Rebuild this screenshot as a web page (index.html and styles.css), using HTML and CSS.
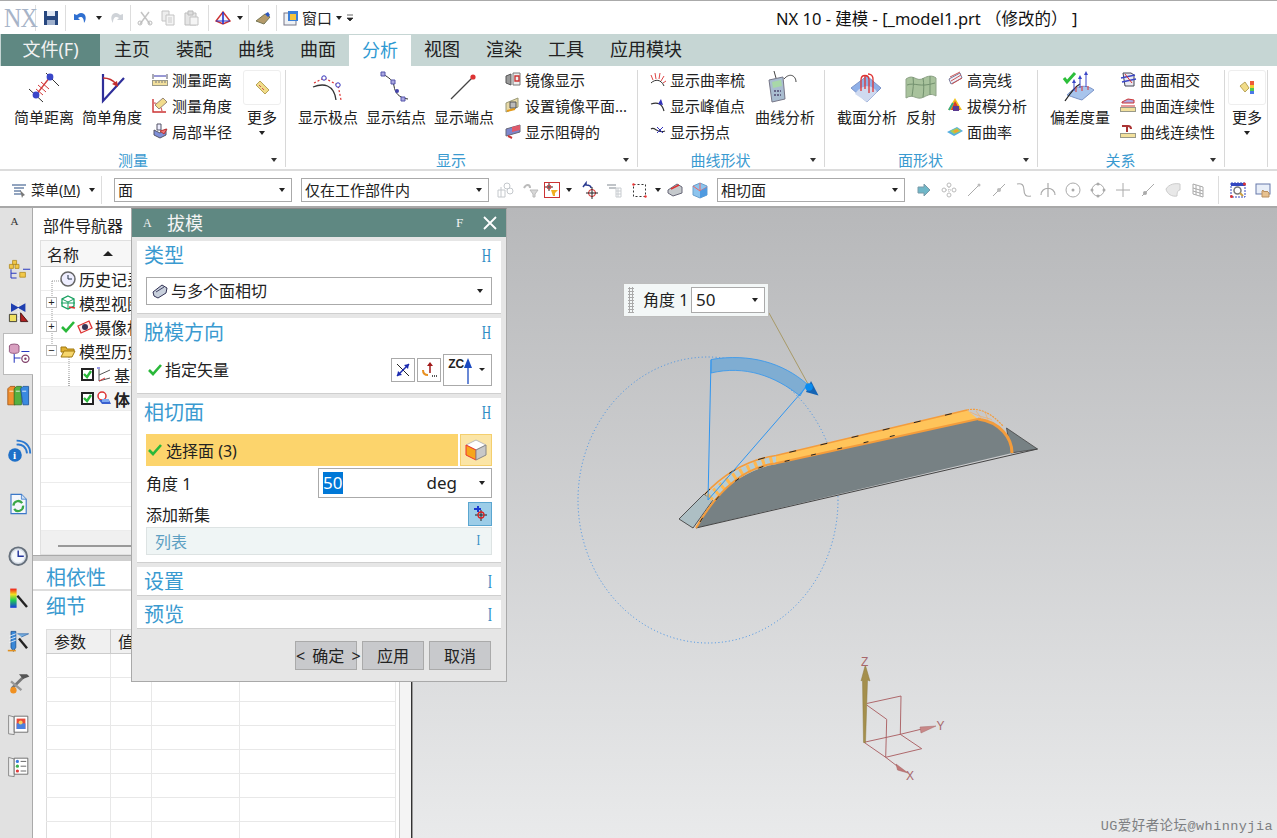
FILE: index.html
```html
<!DOCTYPE html>
<html lang="zh">
<head>
<meta charset="utf-8">
<title>NX 10</title>
<link rel="stylesheet" href="styles.css">
</head>
<body>
<div class="app">
  <header class="qat">
    <div class="qg logo-g"><span class="logo">NX</span></div>
    <div class="qg">
      <svg class="i18"><path d="M2 2h14v14H2z" fill="#27477f"/><path d="M5 2h8v5H5z" fill="#dfe6f2"/><path d="M5 11h8v5H5z" fill="#9fb0cc"/></svg>
    </div>
    <div class="qg">
      <svg class="i16"><path d="M2 4v6h6L6 8c3-2 6-1 6 5 3-4 2-10-3-10-2 0-3 1-4 2z" fill="#2f6fd0"/></svg>
      <i class="caret ml8"></i>
      <svg class="i16 ml7"><path d="M14 4v6H8l2-2C7 6 4 7 4 13 1 9 2 3 7 3c2 0 3 1 4 2z" fill="#cfd3d8"/></svg>
    </div>
    <div class="qg q-edit">
      <svg class="i16"><path d="M3 14 12 2M13 14 4 2" stroke="#c4c4c4" stroke-width="1.5" fill="none"/><circle cx="3" cy="13" r="2" fill="none" stroke="#bbb"/><circle cx="13" cy="13" r="2" fill="none" stroke="#bbb"/></svg>
      <svg class="i16 ml7"><path d="M2 1h7v10H2z" fill="#eee" stroke="#c4c4c4"/><path d="M6 5h8v10H6z" fill="#f4f4f4" stroke="#c4c4c4"/><path d="M8 8h4M8 10h4M8 12h4" stroke="#ccc"/></svg>
      <svg class="i16 ml7"><path d="M2 3h11v12H2z" fill="#e6e6e6" stroke="#bdbdbd"/><path d="M5 1h5v4H5z" fill="#ddd" stroke="#bbb"/><path d="M7 7h8v8H7z" fill="#f5f5f5" stroke="#c4c4c4"/></svg>
    </div>
    <div class="qg">
      <svg class="i16"><path d="M8 2 1 11l7 3 7-3z" fill="#f4f6fb" stroke="#c33" stroke-width="1.4"/><path d="M8 2v12" stroke="#23c" stroke-width="1.6"/><path d="M1 11h14" stroke="#23c"/></svg>
      <i class="caret ml6"></i>
    </div>
    <div class="qg">
      <svg class="i16"><path d="M1 11 10 4l5 3-6 7z" fill="#b49a6a" stroke="#775"/><path d="M10 4l3-2 2 3-2 2z" fill="#2a55c0"/></svg>
    </div>
    <div class="qg last">
      <svg class="i16"><rect x="1" y="3" width="12" height="12" fill="#eef1f4" stroke="#778"/><path d="M5 1h10v10H5z" fill="#3b7fd8"/><path d="M7 4h6v6H7z" fill="#f7c53a"/></svg>
      <span class="qtext">窗口</span>
      <i class="caret ml4"></i>
      <svg class="over ml5"><path d="M0 1h6M0 4h6l-3 3z" fill="#222" stroke="#222" stroke-width=".7"/></svg>
    </div>
    <div class="title">NX 10 - 建模 - [_model1.prt （修改的） ]</div>
  </header>

  <nav class="tabs">
    <div class="file-tab">文件(F)</div>
    <div class="tab">主页</div>
    <div class="tab">装配</div>
    <div class="tab">曲线</div>
    <div class="tab">曲面</div>
    <div class="tab active">分析</div>
    <div class="tab">视图</div>
    <div class="tab">渲染</div>
    <div class="tab">工具</div>
    <div class="tab wide">应用模块</div>
  </nav>

  <section class="ribbon">
    <div class="rgroup g1">
      <div class="rbody">
        <div class="big">
          <svg class="i36"><path d="M20 3l13 13M3 19l14 13" stroke="#333" fill="none"/><path d="M24 7 10 25" stroke="#d23a3a" stroke-width="1.3"/><path d="M15 12l8 7M12 15l8 7M10 19l7 6" stroke="#d23a3a"/><circle cx="24" cy="7" r="3.4" fill="#3a46c8"/><circle cx="10" cy="25" r="3.4" fill="#3a46c8"/></svg>
          <span>简单距离</span>
        </div>
        <div class="big ml8">
          <svg class="i36"><path d="M9 4v27L30 8" fill="none" stroke="#2f2f9a" stroke-width="2.2"/><path d="M9 8c6 0 10 2 13 6" fill="none" stroke="#c42f2f" stroke-width="1.4"/><path d="M24 17l-1-6-5 3z" fill="#c42f2f"/></svg>
          <span>简单角度</span>
        </div>
        <div class="col ml10">
          <div class="row"><svg class="i16"><path d="M1 3v5M15 3v5" stroke="#556"/><path d="M2 5h12" stroke="#33a"/><rect x=".5" y="9.500" width="15" height="5" fill="#f2e09c" stroke="#998"/><path d="M4 10v2M7 10v2M10 10v2M13 10v2" stroke="#777"/></svg><span>测量距离</span></div>
          <div class="row"><svg class="i16"><path d="M1 2v13h13" fill="none" stroke="#c33" stroke-width="1.4"/><path d="M2 6c4 0 7 3 8 8" fill="none" stroke="#c33"/><path d="M3 8l8-7 4 4-8 7z" fill="#f2dc8c" stroke="#987"/></svg><span>测量角度</span></div>
          <div class="row"><svg class="i16"><path d="M2 7l6 3 6-4v6l-6 3-6-3z" fill="#7f8fd8" stroke="#556"/><path d="M5 1h4v6H5z" fill="#eef" stroke="#556"/><path d="M8 8l7-2-3 5z" fill="#e77" stroke="#b33"/></svg><span>局部半径</span></div>
        </div>
        <div class="more ml11">
          <div class="more-box"><svg class="i16"><path d="M2 5l4-4 9 9-4 4z" fill="#f1dc88" stroke="#b9a45a"/><path d="M5 5l2 2M8 8l2 2" stroke="#c55"/></svg></div>
          <span>更多</span><i class="caret more-caret"></i>
        </div>
      </div>
      <div class="rfoot"><span>测量</span><i class="caret"></i></div>
    </div>

    <div class="rgroup g2">
      <div class="rbody">
        <div class="big">
          <svg class="i36"><path d="M3 17c10-4 21-3 23 13" fill="none" stroke="#333" stroke-width="1.3"/><path d="M4 13 14 8l14 7 3 15" fill="none" stroke="#d33" stroke-dasharray="2 2" stroke-width="1.2"/><circle cx="14" cy="8" r="2.200" fill="#fff" stroke="#33b"/><circle cx="28" cy="15" r="2.200" fill="#fff" stroke="#33b"/></svg>
          <span>显示极点</span>
        </div>
        <div class="big ml8">
          <svg class="i36"><path d="M5 4c6 4 10 6 11 12 1 7 5 12 14 13" fill="none" stroke="#333"/><path d="M3 2h4v4H3zM13 10h4v4h-4zM23 27h4v4h-4z" fill="#aaa8e0" stroke="#55a"/><circle cx="19" cy="21" r="2" fill="#44a"/></svg>
          <span>显示结点</span>
        </div>
        <div class="big ml8">
          <svg class="i36"><path d="M5 29 27 7" stroke="#444" stroke-width="1.3"/><circle cx="27" cy="7" r="2.600" fill="#d33"/></svg>
          <span>显示端点</span>
        </div>
        <div class="col ml11">
          <div class="row"><svg class="i16"><path d="M1 5l5-2v11l-5-2z" fill="#999" stroke="#555"/><path d="M8 2h7v12H8z" fill="#eee" stroke="#777"/><path d="M10 5h4v5h-4z" fill="none" stroke="#c33" stroke-width="1.400"/></svg><span>镜像显示</span></div>
          <div class="row"><svg class="i16"><path d="M1 6l12-5v9L1 15z" fill="#e7d9a8" stroke="#997"/><path d="M5 5h6v6H5z" fill="#bbb" stroke="#555"/><path d="M2 14l8-2" stroke="#e39a1a" stroke-width="2"/></svg><span>设置镜像平面...</span></div>
          <div class="row"><svg class="i16"><path d="M1 6l14-4v7L1 13z" fill="#7d86cc" stroke="#667"/><path d="M7 4l8-2v5L7 9z" fill="#e05a6a"/><path d="M3 13l4 2" stroke="#c33" stroke-width="2"/></svg><span>显示阻碍的</span></div>
        </div>
      </div>
      <div class="rfoot"><span>显示</span><i class="caret"></i></div>
    </div>

    <div class="rgroup g3">
      <div class="rbody">
        <div class="col">
          <div class="row"><svg class="i16"><path d="M1 12C5 8 11 8 14 15" fill="none" stroke="#333"/><path d="M3 9 1 4M6 8 5 2M9 8l1-6M11 10l3-5M13 12l3-2" stroke="#d44" fill="none"/></svg><span>显示曲率梳</span></div>
          <div class="row"><svg class="i16"><path d="M1 7c6-2 11-1 13 7" fill="none" stroke="#333" stroke-width="1.200"/><path d="M11 2l2 6-5-1z" fill="#33b"/></svg><span>显示峰值点</span></div>
          <div class="row"><svg class="i16"><path d="M1 6c4-3 6 5 14 2" fill="none" stroke="#333" stroke-width="1.200"/><path d="M7 4l6 6M13 4l-6 6" stroke="#33b"/></svg><span>显示拐点</span></div>
        </div>
        <div class="big ml10">
          <svg class="i36"><path d="M2 10l14-3 2 22-13 3z" fill="#a9bdd0" stroke="#778"/><path d="M5 12l9-2 1 6-9 2z" fill="#a8d8a8"/><path d="M7 21h7M7 25h7" stroke="#668" stroke-width="2" stroke-dasharray="2 1"/><path d="M9 8 7 1M17 9c6-7 12-3 12 3" fill="none" stroke="#444"/></svg>
          <span>曲线分析</span>
        </div>
      </div>
      <div class="rfoot"><span>曲线形状</span><i class="caret"></i></div>
    </div>

    <div class="rgroup g4">
      <div class="rbody">
        <div class="big">
          <svg class="i36"><path d="M2 18 18 6l14 12-14 14z" fill="#8fb0e8" stroke="#7d95c8"/><path d="M6 24C12 14 24 14 28 22l-10 10z" fill="#cfdaf0"/><path d="M12 21V10c0-6 8-6 8 0v13M16 19V5M24 22V9c0-5-5-5-5-5" fill="none" stroke="#d33" stroke-width="1.300"/></svg>
          <span>截面分析</span>
        </div>
        <div class="big w30 ml9">
          <svg class="i36"><path d="M3 9c8-6 10 4 18-1 4-2 8-3 12 0l0 18c-5-3-8-1-12 1-8 4-10-4-18 1z" fill="#a8c29c" stroke="#8fa388"/><path d="M10 7c1 7 0 12-1 19M20 8c1 6 1 12 0 19M27 6l0 19M4 15c8-3 12 3 28-2" stroke="#73916f" fill="none"/></svg>
          <span>反射</span>
        </div>
        <div class="col ml11">
          <div class="row"><svg class="i16"><path d="M2 8 13 2l2 5L4 13z" fill="#f0f0f8" stroke="#779"/><path d="M3 6 13 1M4 10l10-6M5 13l10-6" stroke="#c55" fill="none"/></svg><span>高亮线</span></div>
          <div class="row"><svg class="i16"><path d="M1 13 8 1l7 12z" fill="#f2c11a"/><path d="M8 4l5 9H4z" fill="#d83a28"/><path d="M6 9h6v5H6z" fill="#5a3a90"/><path d="M2 13 6 6" stroke="#3a8" stroke-width="2"/></svg><span>拔模分析</span></div>
          <div class="row"><svg class="i16"><path d="M0 9 10 4l6 4-9 5z" fill="#55aee0"/><path d="M3 8l7-3 4 3-7 3z" fill="#9fd35a"/><path d="M6 8l4-2 2 2-4 2z" fill="#f0a030"/></svg><span>面曲率</span></div>
        </div>
      </div>
      <div class="rfoot"><span>面形状</span><i class="caret"></i></div>
    </div>

    <div class="rgroup g5">
      <div class="rbody">
        <div class="big">
          <svg class="i36"><path d="M5 25C14 15 24 14 32 20l-12 10c-4-1-9-3-15-5z" fill="#a8c4ec" stroke="#7d95c8"/><path d="M3 31C9 22 14 16 18 14" fill="none" stroke="#222" stroke-width="1.300"/><path d="M2 8l3 4 8-9" fill="none" stroke="#2cbf3a" stroke-width="3"/><path d="M12 21V12M18 18V8M24 17V4" stroke="#3a46c8"/><path d="M10 13l2-4 2 4zM16 9l2-4 2 4zM22 5l2-4 2 4z" fill="#3a46c8"/><path d="M14 22v-5M20 21v-5M26 20v-4" stroke="#d33"/></svg>
          <span>偏差度量</span>
        </div>
        <div class="col ml10">
          <div class="row"><svg class="i16"><path d="M3 2h8l3 2v11H5z" fill="#e9e9f2" stroke="#445"/><path d="M1 7l14-3M2 11l14-3" stroke="#3a46c8" stroke-width="1.500"/><path d="M5 3l7 9" stroke="#d33"/></svg><span>曲面相交</span></div>
          <div class="row"><svg class="i16"><path d="M2 5l6-3 6 1v3H2z" fill="#b0a8e0" stroke="#c33"/><path d="M1 9h14" stroke="#c33"/><rect x=".5" y="10.500" width="15" height="4" fill="#f2e09c" stroke="#998"/></svg><span>曲面连续性</span></div>
          <div class="row"><svg class="i16"><path d="M2 3h6c2 0 3 1 3 3" fill="none" stroke="#a33" stroke-width="2"/><path d="M7 3v6" stroke="#a33" stroke-width="2"/><rect x=".5" y="10.500" width="15" height="4" fill="#f2e09c" stroke="#998"/></svg><span>曲线连续性</span></div>
        </div>
      </div>
      <div class="rfoot"><span>关系</span><i class="caret"></i></div>
    </div>

    <div class="rgroup g6">
      <div class="more mt0">
        <div class="more-box"><svg class="i16"><path d="M1 6l5-4 4 6-4 4z" fill="#f1dc88" stroke="#b9a45a"/><path d="M11 1h4v4h-4z" fill="#ee5a3a"/><path d="M11 5h4v3h-4z" fill="#f0d030"/><path d="M11 8h4v3h-4z" fill="#50c850"/><path d="M11 11h4v3h-4z" fill="#4a78e8"/></svg></div>
        <span>更多</span><i class="caret more-caret"></i>
      </div>
    </div>
  </section>

  <section class="toolbar">
    <svg class="i16 menu-ic"><path d="M1 3h14M3 6h10M3 9h7M3 12h7" stroke="#6f86aa" stroke-width="1.500"/><path d="M9 8l5 5-2 1-1 2z" fill="#777"/></svg>
    <span class="menu-t">菜单(<u>M</u>)</span>
    <i class="caret ml4"></i>
    <b class="tsep sep-a"></b>
    <div class="sel w178 ml12"><span>面</span><i class="caret"></i></div>
    <div class="sel w188 ml9"><span>仅在工作部件内</span><i class="caret"></i></div>
    <svg class="i16 ml8"><g fill="none" stroke="#c4c8cc"><path d="M1 8h7v7H1zM4 5v10"/><circle cx="10" cy="4" r="3"/><circle cx="13" cy="9" r="3"/></g></svg>
    <svg class="i16 ml10"><path d="M1 6c2-4 6-4 6 0" fill="none" stroke="#bbb" stroke-width="2"/><path d="M7 8h8l-3 4v3h-2v-3z" fill="#d8d8d8" stroke="#bbb"/></svg>
    <svg class="i16 ml5 boxed"><path d="M5 1v8M1 5h8" stroke="#333"/><circle cx="5" cy="5" r="2" fill="none" stroke="#c33"/><path d="M7 8h7l-3 3v3H9z" fill="#f0b020"/></svg>
    <i class="caret ml6"></i>
    <svg class="i16 ml10"><path d="M1 5l3-4v2c3 0 5 1 5 3" fill="none" stroke="#2a3a90" stroke-width="1.500"/><circle cx="10" cy="11" r="3.500" fill="none" stroke="#d22"/><path d="M10 5v12M4 11h12" stroke="#222"/></svg>
    <svg class="i16 ml8"><path d="M1 3h9M3 6h7" stroke="#c0c4c8" stroke-width="2"/><path d="M10 6h5v9h-5zM10 9h5M10 12h5M12 6v9" fill="none" stroke="#c8ccd0"/></svg>
    <svg class="i16 ml9"><path d="M2.500 2.500h12v12h-12z" fill="none" stroke="#333" stroke-dasharray="2 2"/><circle cx="2.500" cy="2.500" r="1.200" fill="#e33"/><circle cx="14.500" cy="14.500" r="1.200" fill="#e33"/></svg>
    <i class="caret ml8"></i>
    <svg class="i16 ml6"><path d="M1 8 10 2l5 3v6l-9 3-5-3z" fill="#c5c9cc" stroke="#667"/><path d="M4 7l8-4" stroke="#d33" stroke-width="1.500"/></svg>
    <svg class="i16 ml9"><path d="M1 4l7-3 7 3v9l-7 3-7-3z" fill="#8cc4ee" stroke="#6aa0cc"/><path d="M8 1v8l7-4M1 4l7 5" stroke="#e66" fill="none"/><path d="M8 9l7-4v8l-7 3z" fill="#4f9ae0"/></svg>
    <div class="sel w188 ml9"><span>相切面</span><i class="caret"></i></div>
    <div class="gray-icons">
      <svg class="i16"><path d="M2 5h6V2l6 6-6 6v-3H2z" fill="#6fb7c8" stroke="#7a9aa8"/></svg>
      <svg class="i16"><g fill="none" stroke="#bbb"><circle cx="8" cy="3" r="2"/><circle cx="3" cy="8" r="2"/><circle cx="13" cy="8" r="2"/><circle cx="8" cy="13" r="2"/><path d="M8 5v6M5 8h6" stroke-dasharray="1 1"/></g></svg>
      <svg class="i16"><path d="M2 14 14 2" stroke="#aaa"/><circle cx="13" cy="3" r="1.500" fill="#bbb"/></svg>
      <svg class="i16"><path d="M2 14 14 2" stroke="#aaa"/><circle cx="8" cy="8" r="2" fill="#bbb"/></svg>
      <svg class="i16"><path d="M1 2c5-1 7 1 7 6s2 7 7 6" fill="none" stroke="#aaa" stroke-width="1.200"/></svg>
      <svg class="i16"><path d="M1 13C1 4 15 4 15 13M8 1v14" fill="none" stroke="#aaa" stroke-width="1.200"/></svg>
      <svg class="i16"><circle cx="8" cy="8" r="7" fill="none" stroke="#aaa"/><circle cx="8" cy="8" r="1.500" fill="#aaa"/></svg>
      <svg class="i16"><circle cx="8" cy="8" r="6" fill="none" stroke="#aaa"/><circle cx="8" cy="2" r="1.500" fill="#aaa"/><circle cx="8" cy="14" r="1.500" fill="#aaa"/><circle cx="2" cy="8" r="1.500" fill="#aaa"/><circle cx="14" cy="8" r="1.500" fill="#aaa"/></svg>
      <svg class="i16"><path d="M8 1v14M1 8h14" stroke="#aaa"/></svg>
      <svg class="i16"><path d="M2 14 14 2" stroke="#aaa"/><circle cx="5" cy="11" r="2" fill="#aaa"/></svg>
      <svg class="i16"><path d="M1 7c3-5 9-6 14-5v6c-2 0-3 2-3 6-5 1-10-2-11-7z" fill="#e8e8e8" stroke="#ccc"/></svg>
      <svg class="i16"><path d="M3 2l10 3v10L3 12zM3 6l10 3M3 9l10 3M6 3v10M10 4v10" fill="none" stroke="#aaa"/></svg>
    </div>
    <b class="tsep sep-b"></b>
    <svg class="i16 ml11"><rect x="1" y="1" width="14" height="14" fill="#fff" stroke="#3348c0" stroke-dasharray="2 1"/><path d="M1 1h14v3H1z" fill="#3348c0"/><circle cx="7.500" cy="8.500" r="3.500" fill="none" stroke="#777" stroke-width="1.500"/><path d="M10 11l3 3" stroke="#caa040" stroke-width="2"/><circle cx="1.500" cy="14.500" r="1.500" fill="#d33"/><circle cx="14.500" cy="2" r="1.500" fill="#d33"/></svg>
    <svg class="i16 ml9"><rect x="1" y="2" width="14" height="10" fill="#e8eef8" stroke="#6678aa"/><path d="M7 15V9l1-1 1 2 1-1 1 1 1-1 2 2v4z" fill="#e8c290" stroke="#b99060"/></svg>
  </section>

  <main class="main">
    <aside class="rail">
      <div class="rail-pin">A</div>
      <div class="rail-i mt15"><svg class="i30" viewBox="0 0 30 30"><path d="M7 3h5v5H7zM3 8h5v5H3zM10 8h5v5h-5z" fill="#f2c84a" stroke="#b08a20"/><path d="M5 14v11M5 19h7M5 25h7M20 14h9" stroke="#2a3ac0" stroke-width="1.300" fill="none"/><path d="M16 18h7v6h-7z" fill="#f2c84a" stroke="#b08a20"/></svg></div>
      <div class="rail-i"><svg class="i30" viewBox="0 0 30 30"><path d="M5 4l9 5 9-5v11l-9-5-9 5z" fill="#1f3fb0"/><path d="M14 2v26" stroke="#fff" stroke-dasharray="2 2"/><path d="M3 18h9v9H3z" fill="#f0e060" stroke="#222"/><path d="M17 16l9 11h-9z" fill="#b02020" stroke="#300"/></svg></div>
      <div class="rail-i on"><svg class="i30" viewBox="0 0 30 30"><ellipse cx="9" cy="5" rx="6" ry="2.500" fill="#d8a0c0" stroke="#80406a"/><path d="M3 5v7c0 3 12 3 12 0V5" fill="#d8a0c0" stroke="#80406a"/><path d="M9 15v11M9 20h8M18 12h10" stroke="#2a3ac0" stroke-width="1.300" fill="none"/><circle cx="23" cy="21" r="4.500" fill="none" stroke="#80406a" stroke-width="1.500"/><circle cx="23" cy="21" r="1.500" fill="#80406a"/></svg></div>
      <div class="rail-i"><svg class="i30" viewBox="0 0 30 30"><path d="M1 6l3-3h6v23H1z" fill="#f09030" stroke="#a05010"/><path d="M9 6l3-3h6v23H9z" fill="#55b040" stroke="#307020"/><path d="M17 6l3-3h7v23h-7z" fill="#3a8ae0" stroke="#1a5098"/><path d="M3 9h5M11 9h5M19 9h5" stroke="#fff"/></svg></div>
      <div class="rail-i mt13"><svg class="i30" viewBox="0 0 30 30"><circle cx="10" cy="20" r="8.500" fill="#1f70c8"/><text x="7.500" y="25" class="itxt">i</text><path d="M12 7c7-1 12 3 13 11M12 2c10 0 17 6 17 16" fill="none" stroke="#2a78d0" stroke-width="2.400"/></svg></div>
      <div class="rail-i mt11"><svg class="i30" viewBox="0 0 30 30"><path d="M5 3h13l6 6v18H5z" fill="#f4f7fc" stroke="#3a78c8" stroke-width="1.400"/><path d="M18 3v6h6" fill="#cfe0f4" stroke="#3a78c8"/><path d="M8 17a6 6 0 0 1 11-3M20 17a6 6 0 0 1-11 4" fill="none" stroke="#3aa848" stroke-width="2.800"/></svg></div>
      <div class="rail-i mt11"><svg class="i30" viewBox="0 0 30 30"><circle cx="14" cy="14" r="11" fill="#d6dde6" stroke="#66707c" stroke-width="2.400"/><circle cx="14" cy="14" r="8" fill="#f5f8fc"/><path d="M14 7v7h7" fill="none" stroke="#23349c" stroke-width="1.800"/></svg></div>
      <div class="rail-i"><svg class="i30" viewBox="0 0 30 30"><defs><linearGradient id="rb" x1="0" y1="0" x2="0" y2="1"><stop offset="0" stop-color="#f01818"/><stop offset=".3" stop-color="#f5e020"/><stop offset=".6" stop-color="#20d050"/><stop offset="1" stop-color="#1838e0"/></linearGradient></defs><path d="M4 2h8v24H4z" fill="url(#rb)"/><path d="M13 11l12 14" stroke="#222" stroke-width="3"/></svg></div>
      <div class="rail-i"><svg class="i30" viewBox="0 0 30 30"><path d="M5 3h6v20l-3 5-3-5z" fill="#3a88d8" stroke="#1a5090"/><path d="M3 9 11 6M3 13l8-3M3 17l8-3" stroke="#fff"/><path d="M13 6h14l-9 4" fill="#7ab0e0" stroke="#3a70b0"/><path d="M15 12l10 12" stroke="#222" stroke-width="3"/><path d="M1 27h10" stroke="#e09020" stroke-width="2"/></svg></div>
      <div class="rail-i"><svg class="i30" viewBox="0 0 30 30"><path d="M6 22 20 8" stroke="#777" stroke-width="3.500"/><path d="M15 4h10l3 3-8 3z" fill="#555"/><path d="M5 13l13 11" stroke="#999" stroke-width="3"/><circle cx="8" cy="24" r="4" fill="#f09020"/></svg></div>
      <div class="rail-i"><svg class="i30" viewBox="0 0 30 30"><path d="M2 3l7 2v22l-7-1z" fill="#eee" stroke="#777"/><path d="M9 4h17v20H9z" fill="#fff" stroke="#555"/><path d="M12 7h11v13H12z" fill="#e84a3a"/><path d="M12 13h11v7H12z" fill="#4a80e0"/><circle cx="17" cy="12" r="2.500" fill="#f5d060"/></svg></div>
      <div class="rail-i"><svg class="i30" viewBox="0 0 30 30"><path d="M2 3l7 2v22l-7-1z" fill="#eee" stroke="#777"/><path d="M9 4h17v20H9z" fill="#fff" stroke="#555"/><circle cx="13" cy="8" r="2" fill="#3a7ae0"/><circle cx="13" cy="14" r="2" fill="#3ab050"/><circle cx="13" cy="20" r="2" fill="#e03a3a"/><path d="M17 8h7M17 14h7M17 20h7" stroke="#444"/></svg></div>
    </aside>

    <section class="nav">
      <div class="nav-title">部件导航器</div>
      <div class="tree">
        <svg class="tree-lines"><path d="M11 13v72M11 13h9M28 109v24h14M28 133h0M28 85v48" fill="none" stroke="#999" stroke-dasharray="1 1"/></svg>
        <div class="thead"><span>名称</span><i class="up"></i></div>
        <div class="trow"><svg class="i16 first"><circle cx="8" cy="8" r="7" fill="#eef" stroke="#666" stroke-width="1.500"/><path d="M8 4v4h4" fill="none" stroke="#234"/></svg><span>历史记录</span></div>
        <div class="trow"><b class="exp">+</b><svg class="i16 ml3"><path d="M8 1l6 3v7l-6 3-6-3V4z" fill="none" stroke="#18a060" stroke-width="1.300"/><path d="M2 4l6 3 6-3M8 7v7M1 8h14" stroke="#18a060" fill="none"/><path d="M9 12l6 1" stroke="#d33" stroke-width="1.500"/></svg><span>模型视图</span></div>
        <div class="trow"><b class="exp">+</b><svg class="i14 ml4"><path d="M1 7l4 4 8-9" fill="none" stroke="#2ab83a" stroke-width="2.600"/></svg><svg class="i16 ml2"><path d="M1 7 12 2l3 7-11 5z" fill="#fdeaea" stroke="#d33" stroke-width="1.300"/><circle cx="8" cy="8" r="3" fill="#335" /></svg><span class="t2">摄像机</span></div>
        <div class="trow"><b class="exp">−</b><svg class="i16 ml3"><path d="M1 4h5l1 2h7v3H1z" fill="#e0b030" stroke="#a07810"/><path d="M1 14l3-6h11l-3 6z" fill="#f6d66c" stroke="#a07810"/></svg><span>模型历史</span></div>
        <div class="trow indent"><svg class="chk"><rect x="1" y="1" width="11" height="11" fill="#fff" stroke="#222" stroke-width="2"/><path d="M3 6l3 3 4-6" fill="none" stroke="#2ab83a" stroke-width="2.400"/></svg><svg class="i16 ml2"><path d="M3 2v12l11-3M3 8l11-5" fill="none" stroke="#555"/><path d="M3 14l6-3" stroke="#d33"/><path d="M1 1h3" stroke="#33c"/></svg><span class="t2">基准</span></div>
        <div class="trow indent sel-row"><svg class="chk"><rect x="1" y="1" width="11" height="11" fill="#fff" stroke="#222" stroke-width="2"/><path d="M3 6l3 3 4-6" fill="none" stroke="#2ab83a" stroke-width="2.400"/></svg><svg class="i16 ml2"><circle cx="6" cy="5" r="4" fill="#fff" stroke="#d33" stroke-width="1.500"/><path d="M3 9h10l2 4H6z" fill="#3a60d0"/><path d="M6 8h7v3H6z" fill="#7faaf0"/></svg><span class="t2 bold">体</span></div>
        <div class="trow"></div><div class="trow"></div><div class="trow"></div><div class="trow"></div><div class="trow"></div>
        <div class="hscroll"><i></i></div>
      </div>
      <div class="splitter"></div>
      <div class="nav-h">相依性</div>
      <div class="nav-h h2">细节</div>
      <div class="detail">
        <table class="dtable">
          <tr><th class="c1">参数</th><th class="c2">值</th><th class="c3"></th><th></th></tr>
          <tr><td></td><td></td><td></td><td></td></tr>
          <tr><td></td><td></td><td></td><td></td></tr>
          <tr><td></td><td></td><td></td><td></td></tr>
          <tr><td></td><td></td><td></td><td></td></tr>
          <tr><td></td><td></td><td></td><td></td></tr>
          <tr><td></td><td></td><td></td><td></td></tr>
          <tr><td></td><td></td><td></td><td></td></tr>
          <tr><td></td><td></td><td></td><td></td></tr>
        </table>
        <div class="vscroll"></div>
      </div>
    </section>

    <section class="viewport">
      <svg class="scene" viewBox="413 208 864 630">
        <ellipse cx="708" cy="500" rx="130" ry="143" fill="none" stroke="#3d8fe8" stroke-width="1" stroke-dasharray="1 2.500"/>
        <path d="M1006.500 428 1037.500 449 1011 453z" fill="#778184" stroke="#444" stroke-width=".8"/>
        <path d="M696 528C712 500 738 468 775 462L978 419C1000 422 1012 438 1012 453z" fill="#778184"/>
        <path d="M696 528 1037.500 449" stroke="#444" stroke-width="1"/>
        <path d="M679 519 693 528 713 500 704 494z" fill="#adbfc4" stroke="#444" stroke-width=".9"/>
        <path d="M776 455.500 967 410 978 419 776 463.500z" fill="#ffc45a"/>
        <path d="M709 498C727 480 748 465 776 460" fill="none" stroke="#b7cdd4" stroke-width="8"/>
        <path d="M709 498C727 480 748 465 776 460" fill="none" stroke="#ffb84f" stroke-width="8" stroke-dasharray="3 5"/>
        <path d="M705 494C722 476 745 460 776 455.500L967 410" fill="none" stroke="#f39c3c" stroke-width="1.500"/>
        <path d="M696 528C712 500 738 468 775 463.500L978 419" fill="none" stroke="#f39c3c" stroke-width="2"/>
        <path d="M978 419C1000 422 1012 438 1012 453" fill="none" stroke="#f39c3c" stroke-width="3"/>
        <path d="M967 410C980 407 992 414 1003 426" fill="none" stroke="#f39c3c" stroke-width="1.200" stroke-dasharray="2 1"/>
        <path d="M970 412C982 418 990 418 992 420M976 411l6 8M985 412l3 8" fill="none" stroke="#eeb070" stroke-width=".8"/>
        <path d="M705 494C722 476 745 460 776 455.500L967 410" fill="none" stroke="#222" stroke-width="1" stroke-dasharray="7 25"/>
        <path d="M700 522C716 496 740 469 776 463.500L905 433" fill="none" stroke="#222" stroke-width="1" stroke-dasharray="5 22"/>
        <path d="M711 359.500C750 353 783 363 807 384L800 396C775 376 745 365 711 373z" fill="#7fadd2" stroke="#2f95f0" stroke-width=".8"/>
        <path d="M708 500 711 360M708 500 807 386" stroke="#2f95f0" stroke-width="1"/>
        <path d="M769 313 808 384" stroke="#a89a68" stroke-width="1"/>
        <path d="M806 392 811 381 818.500 395.500z" fill="#1564b4"/>
        <circle cx="809" cy="387" r="3.800" fill="#0a8cf0"/>
        <g fill="none" stroke="#a85a5e" stroke-width=".9">
          <path d="M866.700 703.500 901 696 900.300 734.300M866.700 705 886.700 719.300 885.700 757.300M864 742.300 900.300 734.300 921.700 748.700 885.700 757.300 864 742.300M900.300 734.300 922 729M885.700 757.300 897 766"/>
        </g>
        <path d="M863.500 742.500 862.500 680 861 681 865.300 665 870 681 867.500 680 865.500 742.500z" fill="#a48f4c" stroke="#8c7a40" stroke-width=".5"/>
        <path d="M920 727 936 726 921 733z" fill="#c88888" stroke="#a86a6a" stroke-width=".5"/>
        <path d="M896 764 908 773 897.500 770z" fill="#c07878" stroke="#a06060" stroke-width=".5"/>
        <text x="861" y="666" class="axis">Z</text>
        <text x="936.500" y="730" class="axis">Y</text>
        <text x="906" y="780" class="axis">X</text>
      </svg>
      <div class="callout">
        <i class="grip"></i>
        <span>角度 1</span>
        <div class="sel call-sel"><span>50</span><i class="caret"></i></div>
      </div>
      <div class="mark">UG爱好者论坛@whinnyjia</div>
    </section>

    <div class="dialog">
      <div class="dtitle"><span class="pin">A</span><span class="dname">拔模</span><span class="pin f">F</span><svg class="close"><path d="M1 1l12 12M13 1 1 13" stroke="#fff" stroke-width="1.800"/></svg></div>
      <div class="panel p1">
        <div class="phead"><span>类型</span><em>H</em></div>
        <div class="sel type-sel"><svg class="i16"><path d="M1 9 10 2l5 3-1 5-8 5-4-2z" fill="#c8d0dc" stroke="#335"/><path d="M4 9l8-5" stroke="#446"/></svg><span>与多个面相切</span><i class="caret"></i></div>
      </div>
      <div class="panel p2">
        <div class="phead"><span>脱模方向</span><em>H</em></div>
        <div class="vec">
          <svg class="i14"><path d="M1 7l4 4 8-9" fill="none" stroke="#2ab83a" stroke-width="2.600"/></svg>
          <span class="vec-t">指定矢量</span>
          <div class="vbtn"><svg class="i16"><path d="M2 2l12 12" stroke="#222"/><path d="M14 2 2 14" stroke="#1a2ab0" stroke-width="1.500"/><path d="M14 2l-1 5-4-4zM2 14l1-5 4 4z" fill="#1a2ab0"/></svg></div>
          <div class="vbtn ml2"><svg class="i16"><path d="M9 2v9" stroke="#a01818" stroke-width="1.500"/><path d="M9 0l3 4H6z" fill="#a01818"/><path d="M2 8c0 4 2 5 5 5" fill="none" stroke="#e89020" stroke-width="2"/><path d="M11 14h1M13 14h1M15 14h1" stroke="#222" stroke-width="1.500"/></svg></div>
          <div class="zc"><span class="zc-t">ZC</span><svg class="zc-a"><path d="M5 8v18" stroke="#1a4ac0" stroke-width="1.300"/><path d="M5 0l4 10H1z" fill="#1a4ac0"/></svg><i class="caret"></i></div>
        </div>
      </div>
      <div class="panel p3">
        <div class="phead"><span>相切面</span><em>H</em></div>
        <div class="selrow">
          <div class="selbar"><svg class="i14"><path d="M1 7l4 4 8-9" fill="none" stroke="#2ab83a" stroke-width="2.600"/></svg><span>选择面 (3)</span></div>
          <div class="selbtn"><svg class="i24"><path d="M12 2 22 7 12 12 2 7z" fill="#fff" stroke="#bbb"/><path d="M2 7l10 5v10L2 17z" fill="#f6a51c" stroke="#e33"/><path d="M22 7l-10 5v10l10-5z" fill="#c8c8c8" stroke="#888"/></svg></div>
        </div>
        <div class="angle"><span>角度 1</span><div class="sel ang-sel"><b>50</b><span class="deg">deg</span><i class="caret"></i></div></div>
        <div class="addset"><span>添加新集</span><div class="addbtn"><svg class="i16"><path d="M2 2h3V0h2v2h2v2H7v2H5V4H2z" fill="#1a3ad0"/><path d="M9 4v11M3 9h12" stroke="#222"/><circle cx="9" cy="9" r="3" fill="none" stroke="#d22" stroke-width="1.300"/></svg></div></div>
        <div class="listrow"><span>列表</span><em>I</em></div>
      </div>
      <div class="panel p4"><div class="phead"><span>设置</span><em>I</em></div></div>
      <div class="panel p4"><div class="phead"><span>预览</span><em>I</em></div></div>
      <div class="dbtns"><button class="btn ok">&lt; 确定 &gt;</button><button class="btn">应用</button><button class="btn">取消</button></div>
    </div>
  </main>
</div>
</body>
</html>
```

FILE: styles.css
```css
* { box-sizing: border-box; }
html, body { margin: 0; padding: 0; background: #fff; }
body { font-family: "Noto Sans", "Noto Sans CJK SC", sans-serif; color: #222; font-size: 15px; }
.app { width: 1277px; height: 838px; display: flex; flex-direction: column; overflow: hidden; border-top: 1px solid #aaa; }
svg { display: block; flex-shrink: 0; overflow: visible; }
.i14 { width: 14px; height: 14px; }
.i16 { width: 16px; height: 16px; }
.i18 { width: 18px; height: 18px; }
.i24 { width: 24px; height: 24px; }
.i30 { width: 24px; height: 24px; }
.i36 { width: 36px; height: 36px; }
.ml2 { margin-left: 2px; } .ml3 { margin-left: 3px; } .ml4 { margin-left: 4px; } .ml5 { margin-left: 5px; }
.ml6 { margin-left: 6px; } .ml7 { margin-left: 7px; } .ml8 { margin-left: 8px; } .ml9 { margin-left: 9px; }
.ml10 { margin-left: 10px; } .ml11 { margin-left: 11px; } .ml12 { margin-left: 12px; }
.caret { display: block; flex-shrink: 0; width: 0; height: 0; border-left: 3.5px solid transparent; border-right: 3.5px solid transparent; border-top: 4px solid #222; }

/* quick access */
.qat { height: 33px; display: flex; align-items: center; flex-shrink: 0; }
.qg { display: flex; align-items: center; height: 26px; padding: 0 5px 0 6px; border-right: 1px solid #ddd; }
.qg.q-edit { padding-right: 9px; }
.qg.last { border-right: 0; padding-right: 0; }
.logo-g { padding: 0 5px 0 4px; width: 36px; }
.logo { font: 28px/26px "Liberation Serif", serif; color: #a7b4c8; transform: scaleX(.86); transform-origin: left; display: block; letter-spacing: -1px; }
.qtext { font-size: 15px; line-height: 20px; margin-left: 3px; }
.over { width: 6px; height: 8px; }
.title { margin-left: 423px; font-size: 16.500px; line-height: 26px; padding-top: 2px; white-space: nowrap; color: #111; }

/* tabs */
.tabs { height: 32px; flex-shrink: 0; background: #c6d6d4; display: flex; }
.file-tab { width: 99px; margin-left: 1px; margin-right: 1px; background: #5f8882; color: #f2f2f2; font-size: 18px; line-height: 31px; text-align: center; }
.tab { width: 62px; font-size: 18px; line-height: 31px; text-align: center; color: #222; }
.tab.wide { width: 98px; }
.tab.active { background: #fff; color: #2f9ad2; margin-top: 1px; line-height: 30px; }

/* ribbon */
.ribbon { height: 105px; flex-shrink: 0; display: flex; padding-top: 4px; border-bottom: 2px solid #dcdcdc; }
.rgroup { height: 97px; display: flex; flex-direction: column; border-right: 1px solid #d8d8d8; }
.g1 { width: 286px; padding-left: 14px; }
.g2 { width: 352px; padding-left: 12px; }
.g3 { width: 187px; padding-left: 12px; }
.g4 { width: 213px; padding-left: 12px; }
.g5 { width: 187px; padding-left: 12px; }
.g6 { width: 43px; padding-left: 3px; }
.rbody { display: flex; height: 76px; align-items: flex-start; }
.big { width: 60px; display: flex; flex-direction: column; align-items: center; }
.big.w30 { width: 30px; }
.big span { font-size: 15px; line-height: 20px; margin-top: 1px; white-space: nowrap; }
.col { display: flex; flex-direction: column; margin-top: -4px; }
.row { height: 26px; display: flex; align-items: center; gap: 4px; font-size: 15px; white-space: nowrap; }
.more { width: 38px; display: flex; flex-direction: column; align-items: center; }
.more span { font-size: 15px; line-height: 20px; margin-top: 2px; }
.more-box { width: 38px; height: 35px; border: 1px solid #eee; border-radius: 3px; display: flex; align-items: center; justify-content: center; }
.more-caret { margin-top: 4px; }
.rfoot { display: flex; align-items: center; margin-top: auto; margin-bottom: -3px; height: 21px; padding-right: 8px; color: #3a9ad0; font-size: 15px; }
.rfoot span { flex: 1; text-align: center; padding-right: 19px; line-height: 20px; }
.rfoot .caret { border-left-width: 3px; border-right-width: 3px; border-top-color: #333; }

/* toolbar */
.toolbar { height: 37px; padding-top: 2px; flex-shrink: 0; display: flex; align-items: center; border-bottom: 2px solid #a8a8a8; }
.menu-ic { margin-left: 11px; }
.menu-t { margin-left: 4px; font-size: 14px; line-height: 20px; white-space: nowrap; width: 54px; }
.tsep { display: block; width: 1px; height: 28px; background: #ddd; flex-shrink: 0; }
.sep-a { margin-left: 6px; }
.sep-b { margin-left: 12px; }
.sel { height: 24px; border: 1px solid #aaa; background: #fff; display: flex; align-items: center; padding: 0 6px 0 3px; font-size: 15px; flex-shrink: 0; }
.sel > span { flex: 1; line-height: 20px; white-space: nowrap; }
.w178 { width: 178px; }
.w188 { width: 188px; }
.boxed { outline: 1.500px solid #c33; outline-offset: -1px; }
.gray-icons { display: flex; gap: 8.9px; margin-left: 11px; }

/* main */
.main { flex: 1; display: flex; position: relative; min-height: 0; }
.rail { width: 33px; flex-shrink: 0; background: #e1e1e1; border-right: 1px solid #aaa; display: flex; flex-direction: column; align-items: stretch; }
.rail-pin { height: 26px; font: 11px/26px "Liberation Serif", serif; text-align: center; color: #333; margin-right: 3px; }
.rail-i { height: 42px; display: flex; align-items: center; justify-content: flex-start; padding-left: 7px; flex-shrink: 0; }
.mt15 { margin-top: 15px; } .mt13 { margin-top: 13px; } .mt11 { margin-top: 11px; }
.rail-i.on { background: #fff; margin-left: 3px; margin-right: -1px; padding-left: 3px; border: 1px solid #bbb; border-right: 0; }
.itxt { font: 700 14px "Liberation Serif", serif; fill: #fff; }

/* navigator */
.nav { width: 380px; flex-shrink: 0; background: #fff; display: flex; flex-direction: column; border-right: 1px solid #999; }
.nav-title { height: 32px; padding-left: 10px; font-size: 16px; line-height: 36px; }
.tree { position: relative; margin-left: 7px; height: 315px; border: 1px solid #e0e0e0; flex-shrink: 0; overflow: hidden; }
.tree-lines { position: absolute; left: 0; top: 27px; width: 100px; height: 140px; }
.thead { height: 26px; display: flex; align-items: center; padding-left: 6px; border-bottom: 1px solid #ccc; font-size: 16px; background: #f7f7f7; }
.up { display: block; width: 0; height: 0; margin-left: 24px; border-left: 5px solid transparent; border-right: 5px solid transparent; border-bottom: 5px solid #222; }
.trow { height: 24px; display: flex; align-items: center; padding-left: 5px; border-bottom: 1px solid #ececec; font-size: 16px; white-space: nowrap; position: relative; }
.trow > span { margin-left: 3px; }
.trow > .t2 { margin-left: 2px; }
.first { margin-left: 14px; }
.indent { padding-left: 40px; }
.sel-row { background: #f4f4f4; }
.bold { font-weight: 700; }
.exp { display: block; width: 11px; height: 11px; border: 1px solid #bbb; background: #fff; font: 400 11px/9px "Liberation Sans", sans-serif; text-align: center; color: #222; flex-shrink: 0; }
.chk { width: 13px; height: 13px; flex-shrink: 0; }
.hscroll { height: 24px; background: #f0f0f0; display: flex; align-items: center; padding: 5px 0 0 17px; }
.hscroll i { display: block; height: 2px; width: 340px; background: #999; }
.splitter { height: 6px; background: #cfcfcf; border-top: 1px solid #aaa; flex-shrink: 0; }
.nav-h { padding-left: 13px; height: 30px; font-size: 20px; line-height: 33px; color: #3a9ad0; border-bottom: 2px solid #ddd; flex-shrink: 0; }
.nav-h.h2 { height: 38px; line-height: 31px; border: 0; }
.detail { display: flex; padding-left: 13px; flex: 1; min-height: 0; overflow: hidden; }
.dtable { width: 350px; border-collapse: collapse; table-layout: fixed; border-left: 1px solid #ddd; border-top: 1px solid #ddd; align-self: flex-start; }
.dtable th { height: 24px; padding: 0 0 0 7px; background: #f0f0f0; border-right: 1px solid #ccc; border-bottom: 1px solid #ccc; font-weight: 400; font-size: 16px; line-height: 20px; text-align: left; }
.dtable td { height: 24px; border-right: 1px solid #e8e8e8; border-bottom: 1px solid #e8e8e8; padding: 0; }
.c1 { width: 64px; } .c2 { width: 41px; } .c3 { width: 88px; }
.vscroll { width: 13px; margin-left: 3px; border-left: 1px solid #ccc; border-right: 1px solid #333; background: #f4f4f4; }

/* viewport */
.viewport { flex: 1; position: relative; background: linear-gradient(#b7b8ba, #e9eaeb); overflow: hidden; }
.scene { width: 864px; height: 630px; }
.axis { font: 12px "Liberation Sans", sans-serif; fill: #a8686c; }
.callout { position: absolute; left: 210px; top: 75px; width: 146px; height: 34px; background: #f3f7f7; border: 1px solid #bdbdbd; display: flex; align-items: center; padding-left: 4px; font-size: 16px; }
.grip { display: block; width: 6px; height: 26px; background: radial-gradient(circle, #aaa 1px, transparent 1.200px) 0 0 / 3px 3px; }
.callout > span { margin-left: 9px; width: 45px; line-height: 20px; white-space: nowrap; }
.call-sel { width: 74px; height: 26px; margin-left: 3px; padding-left: 4px; font-size: 17px; }
.mark { position: absolute; right: 4px; bottom: 3px; font: 13.500px/16px "Liberation Mono", "Noto Sans CJK SC", monospace; color: #7d7f82; white-space: nowrap; letter-spacing: .45px; }

/* dialog */
.dialog { position: absolute; left: 131px; top: 0; width: 376px; height: 474px; background: #e6e6e6; border: 1px solid #a9a9a9; border-top-color: #888; padding: 0 5px; display: flex; flex-direction: column; }
.dtitle { margin: 0 -5px 4px; height: 28px; background: #5f8882; display: flex; align-items: center; color: #f4f4f4; padding: 0 9px 0 11px; flex-shrink: 0; }
.pin { font: 12px/28px "Liberation Serif", serif; width: 12px; }
.pin.f { margin-left: auto; font-size: 13px; }
.dname { margin-left: 12px; font-size: 18px; line-height: 26px; }
.close { width: 14px; height: 14px; margin-left: 15px; }
.panel { background: #fff; border-bottom: 1px solid #cfcfcf; margin-bottom: 4px; flex-shrink: 0; padding: 0 9px; }
.p1 { height: 73px; }
.p2 { height: 76px; }
.p3 { height: 165px; }
.p4 { height: 29px; }
.phead { height: 29px; display: flex; align-items: center; justify-content: space-between; margin-left: -2px; color: #3a9ad0; font-size: 20px; line-height: 28px; }
.phead em { display: block; font: 18px/28px "Liberation Serif", serif; color: #2f8cc4; margin-right: -1px; transform: scaleX(.72); }
.p1 .phead { height: 30px; margin-bottom: 6px; }
.type-sel { height: 28px; font-size: 16px; padding-left: 5px; padding-right: 8px; }
.type-sel > span { margin-left: 3px; }
.vec { display: flex; align-items: center; margin-top: 6px; height: 33px; }
.vec-t { margin-left: 3px; width: 227px; font-size: 16px; line-height: 20px; }
.vec > .i14 { margin-left: 2px; }
.vbtn { width: 24px; height: 24px; border: 1px solid #aaa; display: flex; align-items: center; justify-content: center; flex-shrink: 0; background: #fff; }
.zc { width: 49px; height: 32px; margin-left: 2px; border: 1px solid #aaa; display: flex; align-items: flex-start; position: relative; }
.zc-t { font: 700 12px/14px "Liberation Sans", sans-serif; margin: 2px 0 0 4px; }
.zc-a { width: 10px; height: 26px; margin: 3px 0 0 -1px; }
.zc .caret { position: absolute; right: 6px; top: 13px; border-left-width: 3px; border-right-width: 3px; border-top-width: 3px; }
.p3 .phead { height: 30px; margin-bottom: 6px; }
.selrow { display: flex; height: 32px; gap: 2px; }
.selbar { flex: 1; background: #fcd46c; display: flex; align-items: center; gap: 4px; padding-left: 2px; font-size: 16px; }
.selbtn { width: 32px; background: #fbe5a6; border: 1px solid #f4cf6e; display: flex; align-items: center; justify-content: center; }
.angle { display: flex; align-items: center; justify-content: space-between; height: 30px; margin-top: 2px; font-size: 16px; }
.ang-sel { width: 174px; height: 30px; padding: 0 6px 0 4px; font-size: 17px; }
.ang-sel b { font-weight: 400; background: #0078d7; color: #fff; line-height: 22px; padding: 0 1px 0 0; }
.ang-sel .deg { text-align: right; padding-right: 22px; }
.addset { display: flex; align-items: center; justify-content: space-between; height: 26px; margin-top: 3px; font-size: 16px; }
.addbtn { width: 24px; height: 24px; background: #9ccde8; border: 1px solid #5ba6d0; display: flex; align-items: center; justify-content: center; }
.listrow { height: 28px; background: #eff5f5; border: 1px solid #dde3e3; display: flex; align-items: center; justify-content: space-between; padding: 0 10px 0 8px; color: #5c9fc2; font-size: 16px; }
.listrow em { display: block; font: 14px "Liberation Serif", serif; color: #2f8cc4; transform: scaleX(.8); }
.dbtns { display: flex; justify-content: flex-end; gap: 5px; margin-top: 8px; padding-right: 10px; }
.btn { width: 62px; height: 29px; background: #c8c9cc; border: 1px solid #aaa; font: 16px/20px "Noto Sans", "Noto Sans CJK SC", sans-serif; color: #222; padding: 0; white-space: nowrap; }
.btn.ok { word-spacing: 3px; }
```
